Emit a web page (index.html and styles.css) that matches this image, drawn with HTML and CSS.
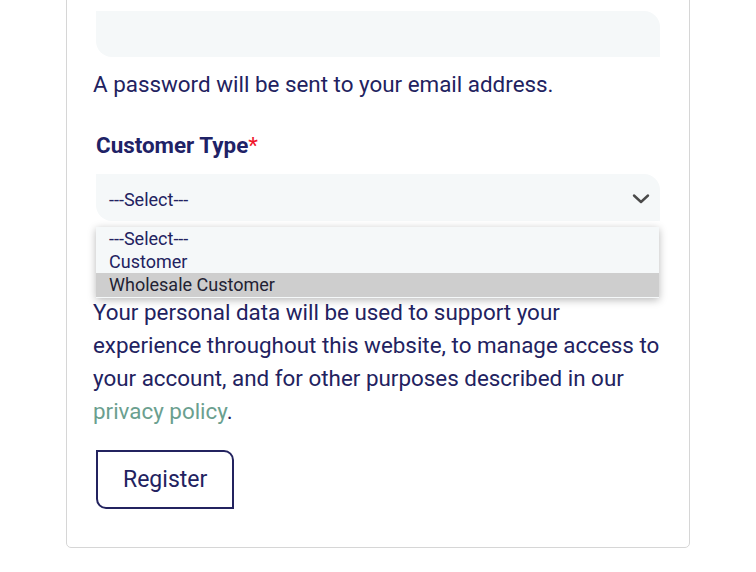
FILE: index.html
```html
<!DOCTYPE html>
<html lang="en">
<head>
  <meta charset="UTF-8" />
  <meta name="viewport" content="width=device-width, initial-scale=1.0" />
  <title>Register</title>
  <link rel="stylesheet" href="styles.css">
</head>
<body>
  <div class="card">
    <form class="register">
      <div class="form-row">
        <div class="input-box"></div>
      </div>

      <p class="note">A password will be sent to your email address.</p>

      <div class="form-row">
        <label class="field-label">Customer Type<span class="required">*</span></label>
      </div>

      <div class="form-row select-row">
        <div class="select-box">
          <span>---Select---</span>
          <svg class="chevron" width="18" height="12" viewBox="0 0 18 12">
            <path d="M2 2.5 L9 9 L16 2.5" fill="none" stroke="#4a4a4a" stroke-width="2.4" stroke-linecap="round" stroke-linejoin="round"/>
          </svg>
        </div>
        <ul class="dropdown">
          <li>---Select---</li>
          <li>Customer</li>
          <li class="active">Wholesale Customer</li>
        </ul>
      </div>

      <p class="privacy">Your personal data will be used to support your experience throughout this website, to manage access to your account, and for other purposes described in our <a href="#">privacy policy</a>.</p>

      <div class="form-row">
        <button type="button" class="btn-register">Register</button>
      </div>
    </form>
  </div>
</body>
</html>
```

FILE: styles.css
```css
html, body {
  margin: 0;
  padding: 0;
  background: #fff;
  font-family: Roboto, "Liberation Sans", sans-serif;
  color: #222260;
}
.card {
  box-sizing: border-box;
  width: 624px;
  margin: -20px auto 0;
  padding: 30px 26px 38px;
  border: 1px solid #d6d6d6;
  border-radius: 5px;
}
.form-row {
  padding: 0 3px;
}
.input-box {
  height: 46px;
  background: #f5f8f9;
  border-radius: 0 16px 0 16px;
}
.note {
  margin: 11px 0 0;
  font-size: 22.4px;
  line-height: 33px;
}
.field-label {
  display: block;
  margin-top: 28px;
  font-size: 22.4px;
  line-height: 33px;
  font-weight: 700;
  color: #1f2266;
}
.required {
  color: #f0142a;
  font-weight: 400;
}
.select-row {
  position: relative;
  margin-top: 12px;
}
.select-box {
  box-sizing: border-box;
  height: 47px;
  display: flex;
  align-items: center;
  justify-content: space-between;
  padding: 3px 10px 0 13px;
  background: #f5f8f9;
  border-radius: 0 16px 0 16px;
  font-size: 18px;
  color: #222260;
}
.chevron {
  display: block;
}
.dropdown {
  position: absolute;
  top: 53px;
  left: 3px;
  right: 4px;
  margin: 0;
  padding: 0 0 1px;
  list-style: none;
  background: #f5f8f9;
  box-shadow: 0 2px 8px rgba(0, 0, 0, 0.28);
  font-size: 18px;
  line-height: 23px;
  color: #222260;
}
.dropdown li {
  padding-left: 13px;
}
.dropdown li.active {
  background: #cecece;
  color: #222233;
  line-height: 24px;
}
.privacy {
  margin: 75px 0 0;
  font-size: 22.4px;
  line-height: 33px;
}
.privacy a {
  color: #6b9f8f;
  text-decoration: none;
}
.btn-register {
  margin-top: 22px;
  height: 59px;
  padding: 0 25px;
  background: #fff;
  border: 2px solid #23235f;
  border-radius: 0 10px 0 10px;
  font-family: Roboto, "Liberation Sans", sans-serif;
  font-size: 23px;
  color: #222260;
}
```
